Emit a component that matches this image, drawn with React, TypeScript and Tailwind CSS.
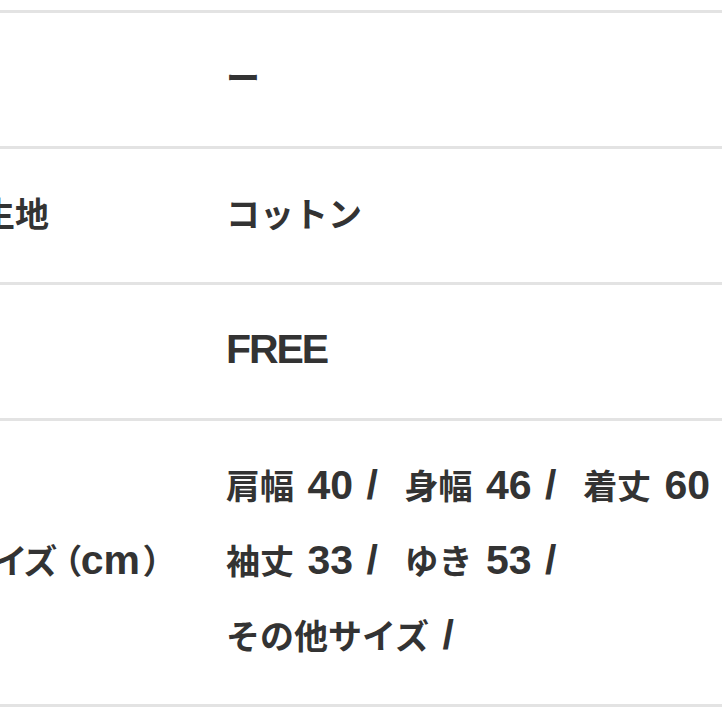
import React from "react";

type SpecRow = {
  label: React.ReactNode;
  labelIndent: string;
  lines: string[];
};

// latin runs are set a little larger than the kana/kanji, like the source font
const MixedText: React.FC<{ text: string }> = ({ text }) => (
  <>
    {text.split(/([A-Za-z0-9/ ]+)/).map((part, i) =>
      /^[A-Za-z0-9/ ]+$/.test(part) ? (
        <span
          key={i}
          className={`text-[41px] leading-none [word-spacing:2px] ${
            part === "FREE" ? "tracking-[-0.05em]" : ""
          }`}
        >
          {part}
        </span>
      ) : (
        <span key={i}>{part}</span>
      )
    )}
  </>
);

const rows: SpecRow[] = [
  { label: "", labelIndent: "", lines: ["ー"] },
  { label: "生地", labelIndent: "ml-[-19px]", lines: ["コットン"] },
  { label: "", labelIndent: "", lines: ["FREE"] },
  {
    label: (
      <>
        サイズ
        <span className="ml-[7px]">（</span>
        <span className="text-[41px] leading-none">cm</span>
        <span className="ml-[4px]">）</span>
      </>
    ),
    labelIndent: "ml-[-38px]",
    lines: ["肩幅 40 /  身幅 46 /  着丈 60", "袖丈 33 /  ゆき 53 /", "その他サイズ /"],
  },
];

const App: React.FC = () => {
  return (
    <div className="h-[722px] w-[722px] overflow-hidden bg-white font-['Liberation_Sans','Noto_Sans_CJK_JP',sans-serif] text-[34px] font-bold text-[#333333]">
      <div className="h-[10px]" />
      <div className="border-t-[3px] border-[#e3e3e3]">
        {rows.map((row, i) => (
          <div
            key={i}
            className="grid grid-cols-[226px_1fr] items-center border-b-[3px] border-[#e3e3e3] py-[29px]"
          >
            <div className="whitespace-nowrap leading-[75px] [font-feature-settings:'palt']">
              <div className={row.labelIndent}>{row.label}</div>
            </div>
            <div>
              {row.lines.map((line) => (
                <div key={line} className="whitespace-pre leading-[75px]">
                  <MixedText text={line} />
                </div>
              ))}
            </div>
          </div>
        ))}
      </div>
    </div>
  );
};

export default App;
